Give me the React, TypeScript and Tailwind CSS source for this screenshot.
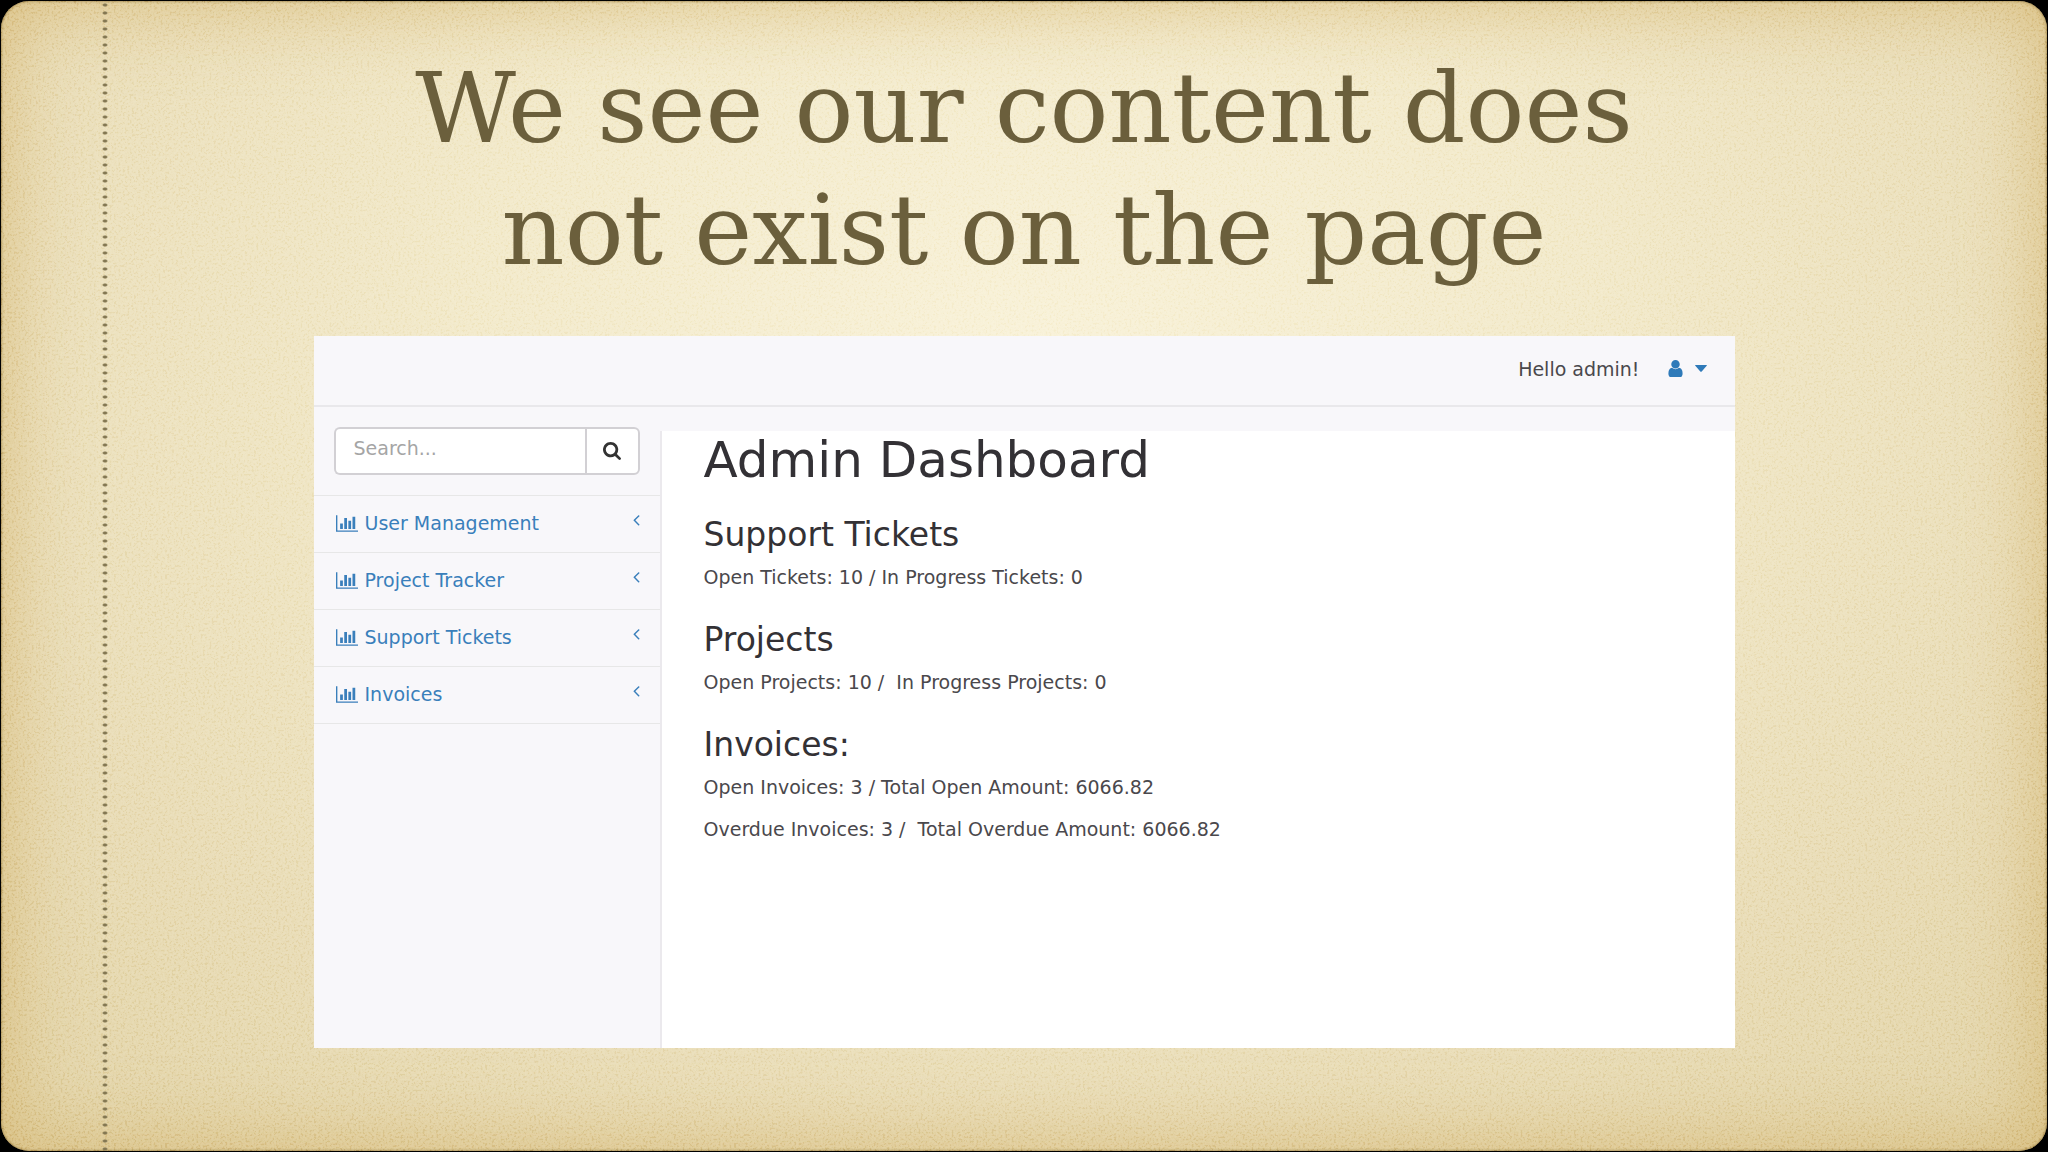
const icons = {
  user: {
    viewBox: "256 128 1280 1536",
    d: "M1536 1399q0 109-62.5 187t-150.5 78h-854q-88 0-150.5-78t-62.5-187q0-85 8.5-160.5t31.5-152 58.5-131 94-89 134.5-34.5q131 128 313 128t313-128q76 0 134.5 34.5t94 89 58.5 131 31.5 152 8.5 160.5zm-256-887q0 159-112.5 271.5t-271.5 112.5-271.5-112.5-112.5-271.5 112.5-271.5 271.5-112.5 271.5 112.5 112.5 271.5z",
  },
  caret: {
    viewBox: "0 0 12 7",
    d: "M0.6 0h10.8q0.9 0 0.3 0.8l-5 5.6q-0.7 0.6-1.4 0l-5-5.6q-0.6-0.8 0.3-0.8z",
  },
  search: {
    viewBox: "64 128 1664 1664",
    d: "M1216 832q0-185-131.5-316.5t-316.5-131.5-316.5 131.5-131.5 316.5 131.5 316.5 316.5 131.5 316.5-131.5 131.5-316.5zm512 832q0 52-38 90t-90 38q-54 0-90-38l-343-342q-179 124-399 124-143 0-273.5-55.5t-225-150-150-225-55.5-273.5 55.5-273.5 150-225 225-150 273.5-55.5 273.5 55.5 225 150 150 225 55.5 273.5q0 220-124 399l343 343q37 37 37 90z",
  },
  chart: {
    viewBox: "0 128 2048 1536",
    d: "M640 896v512h-256v-512h256zm384-512v1024h-256v-1024h256zm1024 1152v128h-2048v-1536h128v1408h1920zm-640-896v768h-256v-768h256zm384-384v1152h-256v-1152h256z",
  },
  angle: {
    viewBox: "621 448 582 1152",
    d: "M1203 544q0 13-10 23l-393 393 393 393q10 10 10 23t-10 23l-50 50q-10 10-23 10t-23-10l-466-466q-10-10-10-23t10-23l466-466q10-10 23-10t23 10l50 50q10 10 10 23z",
  },
};

function Icon({ name, className }: { name: keyof typeof icons; className: string }) {
  return (
    <svg viewBox={icons[name].viewBox} className={className} fill="currentColor" aria-hidden="true">
      <path d={icons[name].d} />
    </svg>
  );
}

const links = ["User Management", "Project Tracker", "Support Tickets", "Invoices"];

const sections = [
  { title: "Support Tickets", lines: ["Open Tickets: 10 / In Progress Tickets: 0"] },
  { title: "Projects", lines: ["Open Projects: 10 /  In Progress Projects: 0"] },
  {
    title: "Invoices:",
    lines: [
      "Open Invoices: 3 / Total Open Amount: 6066.82",
      "Overdue Invoices: 3 /  Total Overdue Amount: 6066.82",
    ],
  },
];

function Grain() {
  return (
    <svg className="absolute inset-0 w-full h-full opacity-25 mix-blend-soft-light pointer-events-none" aria-hidden="true">
      <filter id="grain">
        <feTurbulence type="fractalNoise" baseFrequency="0.45" numOctaves="3" seed="4" />
        <feColorMatrix values="3 0 0 0 -1  3 0 0 0 -1  3 0 0 0 -1  0 0 0 0 1" />
      </filter>
      <rect width="100%" height="100%" filter="url(#grain)" />
    </svg>
  );
}

function Sidebar() {
  return (
    <nav className="w-[346px] shrink-0">
      <form className="flex h-[89px] px-5 pt-5 pb-5 border-b border-[#e7e7e7]">
        <input
          type="text"
          aria-label="Search"
          placeholder="Search..."
          className="min-w-0 flex-1 h-12 pl-[18px] pb-1.5 rounded-l-md border-2 border-r-0 border-[#d2d0d4] bg-white placeholder:text-[#a5a5a5]"
        />
        <button
          type="button"
          aria-label="Search"
          className="w-[55px] h-12 flex items-center justify-center rounded-r-md border-2 border-[#d2d0d4] bg-white text-[#333]"
        >
          <Icon name="search" className="size-[18px]" />
        </button>
      </form>
      <ul>
        {links.map((link) => (
          <li key={link} className="border-b border-[#e7e7e7]">
            <a href="#" className="flex items-center h-14 pl-[22px] pr-5 pb-0.5 text-[#3a7fbb]">
              <Icon name="chart" className="w-[22px] h-[17px] mr-[7px]" />
              {link}
              <Icon name="angle" className="w-[7px] h-3 ml-auto mb-1" />
            </a>
          </li>
        ))}
      </ul>
    </nav>
  );
}

function Dashboard() {
  return (
    <div className="flex flex-col w-[1421px] max-w-full min-h-[712px] bg-[#f8f7fa] text-[19px] leading-[26px] text-[#4a484c] font-['DejaVu_Sans',sans-serif]">
      <header className="flex items-center justify-end h-[71px] pr-7 pb-1 border-b-2 border-[#e9e8eb]">
        <span>Hello admin!</span>
        <button type="button" aria-label="Account" className="flex items-center gap-3 ml-7 text-[#2f7ab9]">
          <Icon name="user" className="w-[15px] h-[17px]" />
          <Icon name="caret" className="w-3 h-[7px]" />
        </button>
      </header>
      <div className="flex flex-1">
        <Sidebar />
        <main className="flex-1 mt-6 pl-[42px] border-l-2 border-[#ebe9ed] bg-white">
          <h1 className="text-[50px] leading-[58px] font-medium text-[#333135]">Admin Dashboard</h1>
          {sections.map((section) => (
            <section key={section.title} className="mt-8 first-of-type:mt-7">
              <h2 className="text-[33px] leading-[36px] text-[#333135]">{section.title}</h2>
              {section.lines.map((line) => (
                <p key={line} className="mt-[11px] mb-4 whitespace-pre">
                  {line}
                </p>
              ))}
            </section>
          ))}
        </main>
      </div>
    </div>
  );
}

export default function App() {
  return (
    <div className="min-h-screen flex bg-black p-px">
      <div className="relative flex-1 flex flex-col items-center overflow-hidden rounded-[28px] bg-[radial-gradient(ellipse_60%_75%_at_50%_30%,#f8f1d7_0%,#f2e9c9_45%,#e8dbb4_90%,#e2d3a6_120%)] shadow-[inset_0_0_80px_#c9a24c99,inset_0_0_3px_#5a4010]">
        <Grain />
        {/* Stitching down the left margin */}
        <div className="absolute inset-y-0 left-[100px] w-2 bg-[radial-gradient(ellipse_3px_2px_at_center,#837752_50%,transparent_100%)] bg-[length:8px_8px]" />
        <h1 className="relative mt-[46px] mb-[45px] text-center text-[98px] leading-[122px] text-[#6b5f3c] font-['DejaVu_Serif',serif]">
          We see our content does
          <br />
          not exist on the page
        </h1>
        <div className="relative max-w-full">
          <Dashboard />
        </div>
      </div>
    </div>
  );
}
